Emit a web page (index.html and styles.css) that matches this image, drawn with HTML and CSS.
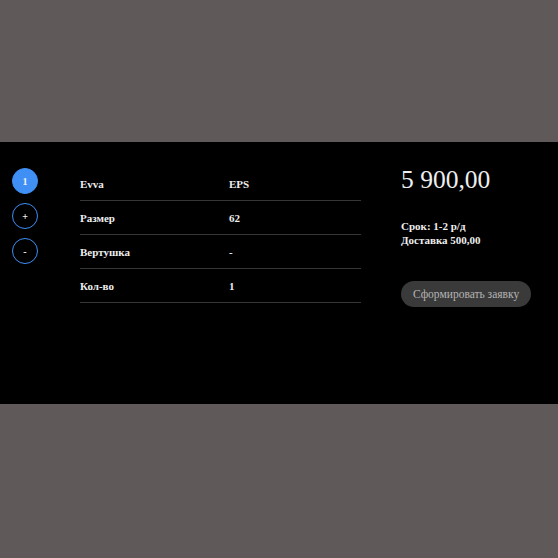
FILE: index.html
```html
<!DOCTYPE html>
<html lang="ru">
<head>
<meta charset="utf-8">
<title>Заказ</title>
<link rel="stylesheet" href="styles.css">
</head>
<body>
<main class="panel">
  <nav class="steps">
    <button class="step step-active">1</button>
    <button class="step">+</button>
    <button class="step">-</button>
  </nav>
  <table class="specs">
    <tr><td class="key">Evva</td><td>EPS</td></tr>
    <tr><td class="key">Размер</td><td>62</td></tr>
    <tr><td class="key">Вертушка</td><td>-</td></tr>
    <tr><td class="key">Кол-во</td><td>1</td></tr>
  </table>
  <aside class="summary">
    <div class="price">5 900,00</div>
    <div class="terms">
      <div>Срок: 1-2 р/д</div>
      <div>Доставка 500,00</div>
    </div>
    <button class="order">Сформировать заявку</button>
  </aside>
</main>
</body>
</html>
```
FILE: styles.css
```css
html, body {
  margin: 0;
  padding: 0;
}
body {
  background: #5f5a59;
  min-height: 558px;
  padding-top: 142px;
  box-sizing: border-box;
  font-family: "Liberation Serif", "Times New Roman", serif;
  color: #eeeeee;
}
.panel {
  box-sizing: border-box;
  width: 100%;
  height: 262px;
  background: #000;
  display: flex;
  align-items: flex-start;
  padding: 26px 0 0 12px;
}
.steps {
  display: flex;
  flex-direction: column;
  gap: 9px;
  width: 26px;
}
.step {
  box-sizing: border-box;
  width: 26px;
  height: 26px;
  border-radius: 50%;
  border: 1px solid #3f8ff5;
  background: transparent;
  color: #f2f2f2;
  font-family: "Liberation Serif", serif;
  font-weight: bold;
  font-size: 10px;
  padding: 0;
  display: flex;
  align-items: center;
  justify-content: center;
}
.step-active {
  background: #3f8ff5;
}
.specs {
  margin: -1px 0 0 42px;
  width: 281px;
  border-collapse: collapse;
  font-size: 11px;
  font-weight: bold;
}
.specs td {
  height: 33px;
  padding: 0;
  border-bottom: 1px solid #363636;
  vertical-align: middle;
}
.specs .key {
  width: 149px;
}
.summary {
  margin-left: 40px;
  display: flex;
  flex-direction: column;
  align-items: flex-start;
}
.price {
  font-size: 25.5px;
  line-height: 24px;
}
.terms {
  margin-top: 27px;
  font-size: 11px;
  line-height: 14px;
  font-weight: bold;
}
.order {
  margin-top: 34px;
  height: 26px;
  padding: 0 12px;
  border: none;
  border-radius: 13px;
  background: #3a3a3a;
  color: #b4b4b4;
  font-family: "Liberation Serif", serif;
  font-size: 11.5px;
}
```
